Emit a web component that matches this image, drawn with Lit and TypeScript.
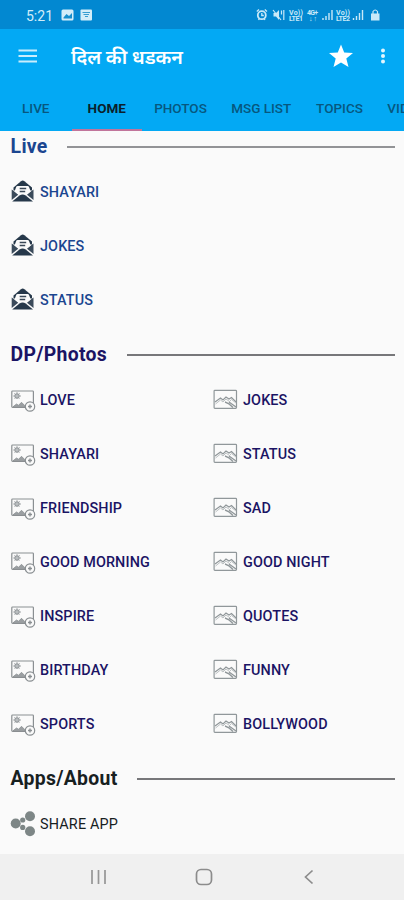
import { LitElement, html, css, svg } from "lit";
import { customElement, property } from "lit/decorators.js";
import { classMap } from "lit/directives/class-map.js";

const icons: Record<string, unknown> = {
  mail: svg`<svg width="24" height="24" viewBox="0 0 24 24">
    <path d="M2.500 7.500 10 1.200Q11.700 0 13.400 1.200L21 7.500v3H2.500z" fill="#26384a"/>
    <path d="M.7 9.500 7.500 14.500 .7 20zM22.500 9.500 15.700 14.500l6.800 5.500z" fill="#3a4a5a"/>
    <path d="M5 7.500q0-1.500 1.500-1.500h10.200q1.500 0 1.500 1.500l1.500 4-4 3.500H7.500l-4-3.500z" fill="#fafafa"/>
    <path d="M1.200 21.500 8.500 15.500q3.100-2 6.200 0l7.300 6z" fill="#26384a"/>
    <path d="M8.700 8.500h6.500M8.700 11.500h5.500" stroke="#3a4857" stroke-width="1.500"/></svg>`,
  add: svg`<svg width="24" height="24" viewBox="0 0 24 24" fill="none" stroke="#8a8f92">
    <rect x=".8" y="3" width="21.600" height="16.400" rx=".8" stroke-width="1.200"/>
    <circle cx="6" cy="8" r="2.300" fill="#b9bdbf"/><path d="M6 4.300v.8M2.800 8h-.6M9.200 8h.8M3.500 5.500l.7.700M8.500 5.500l-.7.700M3.700 10.500l.7-.7M8.300 10.500l-.7-.7"/>
    <path d="M2 18.800 5.500 16l2 1.300 3-3 3.500 3.500v1z" fill="#9b9fa2" stroke-width=".8"/>
    <circle cx="19" cy="18.500" r="4.700" fill="#fafafa" stroke-width="1.200"/>
    <path d="M19 16.500v4M17 18.500h4" stroke-width="1.400"/></svg>`,
  picture: svg`<svg width="24" height="24" viewBox="0 0 24 24" fill="none" stroke="#90979a">
    <rect x=".1" y="2.300" width="22.400" height="18" rx=".8" stroke-width="1.200"/>
    <path d="M1 14 6.500 10l2.500 2L12 9l3 2 2.500-1.500 4.500 4.500" stroke-width="1.200"/>
    <path d="M1.500 16 6.500 12l2.500 2 3-3 3.500 2.500 2-2 4.500 3.500" stroke="#bcc1c3"/>
    <path d="M11 14q4 1 8 5.500M15 14l7 5" stroke-width="1.300"/></svg>`,
  share: svg`<svg width="26" height="26" viewBox="0 0 26 26" fill="#7d8686">
    <circle cx="4.700" cy="12.500" r="5"/><circle cx="19" cy="5.200" r="5"/><circle cx="19" cy="20.200" r="5"/>
    <circle cx="11.700" cy="9" r="2.600"/><circle cx="11.700" cy="16.400" r="2.600"/></svg>`,
};

@customElement("menu-item")
class MenuItem extends LitElement {
  @property() icon = "mail";
  @property() label = "";
  static styles = css`
    :host { display: flex; align-items: center; height: 54px; padding-left: 11px; font-size: 14.400px; font-weight: 500; letter-spacing: .12px; }
    .icon { flex: none; width: 29px; height: 26px; display: flex; align-items: center; }
    .icon svg { overflow: visible; }
    .text { white-space: nowrap; line-height: 20px; padding-top: 2px; }
  `;
  render() {
    return html`<span class="icon">${icons[this.icon]}</span><span class="text">${this.label}</span>`;
  }
}

@customElement("section-title")
class SectionTitle extends LitElement {
  @property() label = "";
  static styles = css`
    :host { display: flex; align-items: center; box-sizing: border-box; height: 46px; padding: 8px 9px 0 10.600px; gap: 19.500px; font-size: 19.400px; font-weight: 700; letter-spacing: .3px; }
    .text { white-space: nowrap; line-height: 24px; padding-top: 2px; }
    .rule { flex: 1; height: 2px; margin-top: 1px; background: var(--rule, #77777a); }
  `;
  render() {
    return html`<span class="text">${this.label}</span><span class="rule"></span>`;
  }
}

const tabs = ["LIVE", "HOME", "PHOTOS", "MSG LIST", "TOPICS", "VIDEO"];
const live = ["SHAYARI", "JOKES", "STATUS"];
const photos = [
  ["LOVE", "JOKES"], ["SHAYARI", "STATUS"], ["FRIENDSHIP", "SAD"], ["GOOD MORNING", "GOOD NIGHT"],
  ["INSPIRE", "QUOTES"], ["BIRTHDAY", "FUNNY"], ["SPORTS", "BOLLYWOOD"],
];

@customElement("app-root")
class AppRoot extends LitElement {
  static styles = css`
    :host { display: flex; flex-direction: column; width: 100%; height: 900px; overflow: hidden; background: #fafafa; font-family: Roboto, "Noto Sans Devanagari", "Noto Sans", sans-serif; }
    .status { display: flex; align-items: center; height: 29px; flex: none; background: #0288d1; color: #d3edf9; }
    .time { margin-left: 26px; width: 35px; font-size: 14px; line-height: 20px; margin-top: 2px; }
    .notes { margin-top: 1px; }
    .signals { margin: 1px 21px 0 auto; }
    .bar { display: flex; align-items: center; height: 54px; flex: none; background: #03a9f4; color: #fff; }
    .burger { margin-left: 18px; width: 53px; }
    .title { font-size: 19.600px; font-weight: 600; line-height: 26px; white-space: nowrap; padding-top: 3px; letter-spacing: -.1px; }
    .star { margin-left: auto; }
    .more { margin: 0 18px 0 27px; }
    .tabs { display: flex; height: 48px; flex: none; background: #03a9f4; overflow: hidden; }
    .tab { flex: none; display: flex; align-items: center; justify-content: center; box-sizing: border-box; padding-top: 3px; font-size: 13.500px; font-weight: 500; color: #07577e; white-space: nowrap; border-bottom: 2px solid transparent; }
    .t0 { width: 71.500px; } .t1 { width: 70.500px; } .t2 { width: 77px; } .t3 { width: 84.500px; } .t4 { width: 72px; } .t5 { width: 62px; }
    .active { color: #0b1f2c; font-weight: 700; border-color: #c1759b; }
    .live { color: #1b4690; }
    .live .first { height: 34px; padding-top: 0; padding-bottom: 4px; --rule: #929396; }
    .photos { color: #1b1464; }
    .grid { display: grid; grid-template-columns: 203px 201px; }
    .apps { color: #17201f; flex: 1; }
    .apps menu-item { font-weight: 400; letter-spacing: .18px; }
    .nav { display: flex; align-items: center; justify-content: space-between; flex: none; height: 46px; padding: 0 88px 0 90px; background: #f0f0f0; }
    .tiny { font-size: 7px; font-weight: 700; }
    svg { display: block; }
  `;
  render() {
    return html`
      <div class="status">
        <span class="time">5:21</span>
        <svg class="notes" width="32" height="14" viewBox="0 0 32 14" fill="#d3edf9">
          <rect x=".5" y="1.500" width="12" height="11" rx="1.500"/><path d="M2.500 9.500 5.500 6l2.500 2 3-3v5.500h-8.500z" fill="#178fcd"/>
          <rect x="19.500" y="1.500" width="11.500" height="11" rx="1"/><path d="M21.500 4.500h7.500M22.500 6.500h5.500M24 8.500h3" stroke="#369dd1"/>
        </svg>
        <svg class="signals" width="127" height="16" viewBox="0 0 127 16" fill="#c9e9f8" stroke="#c9e9f8">
          <circle cx="5.800" cy="8.200" r="4" fill="none" stroke-width="1.800"/><path d="M5.800 6v2.500h2M.8 4.500 3 2.500M11 4.500 8.800 2.500M2.500 13l1-1.500M9 13 8 11.500" fill="none" stroke-width="1.300"/>
          <path d="M17.500 6h2.500l3-3v10L20 9.500h-2.500z" stroke="none"/><path d="M17 3l8 10M25.500 3.500v4M27.800 3v10" stroke-width="1.200"/>
          <g class="tiny" stroke="none"><text x="33" y="7.700" textLength="14">Vo))</text><text x="33" y="14" textLength="14">LTE1</text><text x="51" y="7.700" textLength="11">4G+</text><text x="53" y="14" textLength="8">↓↑</text><text x="80" y="7.700" textLength="14">Vo))</text><text x="80" y="14" textLength="14">LTE2</text></g>
          <path d="M67 13v-2M70 13V9M73 13V6M76 13V3M97.500 13v-2M100.500 13V9M103.500 13V6M106.500 13V3" stroke-width="1.400"/>
          <rect x="115.500" y="7" width="7.500" height="6"/><path d="M117 7V4.500q2.200-3 4.500 0V7" fill="none" stroke-width="1.200"/>
        </svg>
      </div>
      <div class="bar">
        <svg class="burger" width="53" height="16" viewBox="0 0 53 16" stroke="#c9edfc" stroke-width="2"><path d="M.5 2.500h18.500M.5 8h18.500M.5 13.500h18.500"/></svg>
        <span class="title">दिल की धडकन</span>
        <svg class="star" width="24" height="24" viewBox="0 0 24 24" fill="#fff"><path d="M12 .5 15.200 8.500 24 9.100 17.300 14.600 19.500 23 12 18.500 4.500 23 6.700 14.600 0 9.100 8.800 8.500z"/></svg>
        <svg class="more" width="6" height="18" viewBox="0 0 6 18" fill="#e2f6fe"><circle cx="3" cy="3.500" r="2"/><circle cx="3" cy="9" r="2"/><circle cx="3" cy="14.500" r="2"/></svg>
      </div>
      <div class="tabs">${tabs.map((t, i) => html`<div class=${classMap({ tab: true, ["t" + i]: true, active: i === 1 })}>${t}</div>`)}</div>
      <div class="live">
        <section-title class="first" label="Live"></section-title>
        ${live.map((l) => html`<menu-item icon="mail" label=${l}></menu-item>`)}
      </div>
      <div class="photos">
        <section-title label="DP/Photos"></section-title>
        <div class="grid">${photos.map(([a, b]) => html`<menu-item icon="add" label=${a}></menu-item><menu-item icon="picture" label=${b}></menu-item>`)}</div>
      </div>
      <div class="apps">
        <section-title label="Apps/About"></section-title>
        <menu-item icon="share" label="SHARE APP"></menu-item>
      </div>
      <div class="nav">
        <svg width="17" height="16" viewBox="0 0 17 16" stroke="#969696" stroke-width="1.700"><path d="M2 1v14M8.500 1v14M15 1v14"/></svg>
        <svg width="18" height="18" viewBox="0 0 18 18" fill="none" stroke="#8c8c8c" stroke-width="1.700"><rect x="1.500" y="1.500" width="15" height="15" rx="4.500"/></svg>
        <svg width="16" height="18" viewBox="0 0 16 18" fill="none" stroke="#8c8c8c" stroke-width="1.700"><path d="M12.500 2.500 5.500 9 12.500 15.500"/></svg>
      </div>`;
  }
}
